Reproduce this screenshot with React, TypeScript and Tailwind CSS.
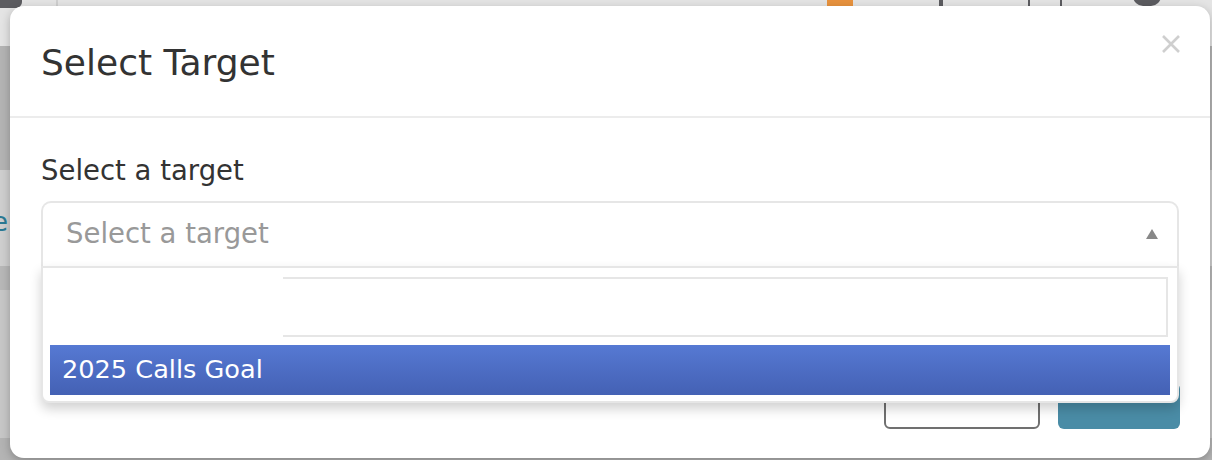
import React from 'react';

const font = { fontFamily: '"DejaVu Sans", "Noto Sans", sans-serif' };

const App: React.FC = () => {
    return (
        <div className="relative w-[1212px] h-[460px] overflow-hidden bg-[#bdbdbd]" style={font}>
            {/* page behind the overlay */}
            <div className="absolute inset-0 flex flex-col">
                <div className="h-[46px] bg-[#e4e4e4] relative">
                    <div className="absolute left-0 top-0 w-[22px] h-[8px] rounded-br-md bg-[#5c5c60]" />
                    <div className="absolute left-[56px] top-0 w-[2px] h-[46px] bg-[#cfcfcf]" />
                    <div className="absolute left-[827px] top-0 w-[26px] h-[8px] bg-[#e8923e]" />
                    <div className="absolute left-[939px] top-0 w-[4px] h-[8px] bg-[#5c5c60]" />
                    <div className="absolute left-[1028px] top-0 w-[34px] h-[8px] border-2 border-t-0 border-[#5c5c60]" />
                    <div className="absolute left-[1133px] top-[-14px] w-[28px] h-[20px] rounded-full bg-[#5c5c60]" />
                </div>
                <div className="h-[124px] bg-[#b4b4b4]" />
                <div className="h-[96px] bg-[#cfcfcf] flex items-center">
                    <span className="text-[26px] text-[#2b7a94] -ml-[8px] mt-[8px]">e</span>
                </div>
                <div className="h-[24px] bg-[#b8b8b8]" />
                <div className="h-[148px] bg-[#c7c7c7]" />
                <div className="flex-1 bg-[#b4b4b4]" />
            </div>

            {/* modal */}
            <div className="absolute left-[10px] top-[6px] w-[1200px] h-[452px] bg-white rounded-[14px] shadow-[0_3px_10px_rgba(0,0,0,0.25)] flex flex-col">
                <div className="h-[112px] shrink-0 border-b-2 border-[#ececec] flex items-center justify-between pl-[31px] pr-[30px]">
                    <h4 className="text-[36px] text-[#333333] leading-none mt-[4px]">Select Target</h4>
                    <svg width="18" height="18" viewBox="0 0 18 18" className="self-start mt-[29px]">
                        <path d="M1 1 L17 17 M17 1 L1 17" stroke="#cfcfcf" strokeWidth="2.6" />
                    </svg>
                </div>

                <div className="relative flex-1 px-[31px] pt-[39px]">
                    <label className="block text-[27.5px] text-[#333333] leading-none mb-[16px]">Select a target</label>

                    <div className="relative">
                        <div className="h-[65px] border-2 border-b-0 border-[#e6e6e6] rounded-t-[10px] flex items-center justify-between pl-[23px] pr-[19px]">
                            <span className="text-[27.5px] text-[#999999] leading-none">Select a target</span>
                            <svg width="12" height="10" viewBox="0 0 12 10">
                                <path d="M6 0 L12 10 L0 10 Z" fill="#888888" />
                            </svg>
                        </div>

                        {/* open dropdown */}
                        <div className="absolute left-0 right-0 top-[65px] z-10 bg-white border-2 border-[#e6e6e6] rounded-b-[8px] shadow-[0_6px_12px_rgba(0,0,0,0.18)] px-[7px] pt-[9px] pb-[6px]">
                            <div className="flex h-[60px] mr-[2px]">
                                <div className="w-[233px]" />
                                <div className="flex-1 border-2 border-l-0 border-[#e6e6e6]" />
                            </div>
                            <div className="mt-[8px] h-[50px] bg-gradient-to-b from-[#5679d3] to-[#4461b4] flex items-center pl-[12px]">
                                <span className="text-[25.6px] text-white leading-none">2025 Calls Goal</span>
                            </div>
                        </div>
                    </div>

                    {/* footer buttons behind the dropdown */}
                    <div className="absolute right-[30px] top-[265px] flex gap-[18px]">
                        <button className="w-[156px] h-[46px] border-2 border-[#707070] rounded-[6px] bg-white" />
                        <button className="w-[122px] h-[46px] rounded-[6px] bg-[#4a8ca6]" />
                    </div>
                </div>
            </div>
        </div>
    );
};

export default App;
